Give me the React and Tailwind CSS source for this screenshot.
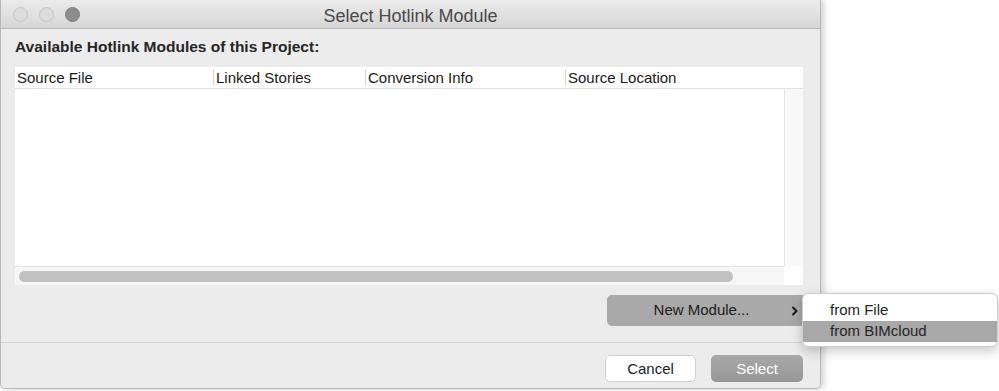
import React from "react";

const columns = [
  { title: "Source File", width: "w-[198px]" },
  { title: "Linked Stories", width: "w-[152px]" },
  { title: "Conversion Info", width: "w-[200px]" },
  { title: "Source Location", width: "flex-1" },
];

const App = () => {
  return (
    <div className="relative w-[999px] h-[391px] bg-white overflow-hidden font-['Liberation_Sans',Arial,sans-serif] text-[#1e1e1e]">
      {/* dialog window */}
      <div className="w-[821px] h-[389px] flex flex-col bg-[#ececec] border-l border-r border-b border-[#b8b8b8] rounded-b-[5px] shadow-[3px_0_6px_rgba(0,0,0,0.18)]">
        {/* title bar */}
        <div className="grid grid-cols-[1fr_auto_1fr] items-center h-[29px] bg-gradient-to-b from-[#ebebeb] to-[#d6d6d6] border-b border-[#b9b9b9]">
          <div className="flex items-center gap-[11px] pl-[12px]">
            <span className="w-[15px] h-[15px] rounded-full bg-[#dcdcdc] border border-[#c6c6c6]"></span>
            <span className="w-[15px] h-[15px] rounded-full bg-[#dcdcdc] border border-[#c6c6c6]"></span>
            <span className="w-[15px] h-[15px] rounded-full bg-[#8d8d8d] border border-[#7e7e7e]"></span>
          </div>
          <div className="text-[18px] text-[#4a4a4a] leading-none pt-[3px]">Select Hotlink Module</div>
          <div></div>
        </div>

        {/* body */}
        <div className="px-[14px] pt-[9px]">
          <div className="text-[15.5px] font-bold text-[#262626] leading-[18px] h-[29px]">
            Available Hotlink Modules of this Project:
          </div>

          {/* table */}
          <div className="w-[788px] flex flex-col">
            <div className="flex items-center h-[22px] bg-white border-b border-[#e2e2e2]">
              {columns.map((col, i) => (
                <div key={col.title} className={`${col.width} flex items-center h-full`}>
                  {i > 0 && <span className="w-px h-[16px] bg-[#d6d6d6] mr-[2px]"></span>}
                  <span className={`text-[15px] leading-none text-[#1a1a1a] ${i === 0 ? "pl-[2px]" : ""}`}>{col.title}</span>
                </div>
              ))}
            </div>
            <div className="flex h-[177px]">
              <div className="flex-1 bg-white"></div>
              <div className="w-[19px] bg-[#f8f8f8] border-l border-[#e6e6e6]"></div>
            </div>
            <div className="flex h-[19px]">
              <div className="flex-1 flex items-center bg-[#f6f6f6] border-t border-[#e4e4e4] pl-[4px]">
                <div className="w-[714px] h-[11px] rounded-full bg-[#c2c2c2]"></div>
              </div>
              <div className="w-[19px] bg-white"></div>
            </div>
          </div>

          {/* new module button */}
          <div className="flex justify-end mt-[10px]">
            <div className="relative w-[199px] h-[31px] rounded-[5px] bg-[#a9a9a9] flex items-center justify-center text-[15px] text-[#1c1c1c]">
              <span className="mr-[10px]">New Module...</span>
              <svg className="absolute right-[7px] top-[11px]" width="8" height="10" viewBox="0 0 8 10">
                <polyline points="2,1.5 5.5,5 2,8.5" fill="none" stroke="#1c1c1c" strokeWidth="2" strokeLinecap="round" strokeLinejoin="round" />
              </svg>
            </div>
          </div>
        </div>

        {/* divider */}
        <div className="mt-[16px] h-px bg-[#d2d2d2]"></div>

        {/* footer */}
        <div className="flex justify-end gap-[15px] pr-[17px] pt-[12px]">
          <button className="w-[91px] h-[27px] rounded-[5px] bg-white border border-[#cfcfcf] text-[15px] text-[#1c1c1c] leading-none">
            Cancel
          </button>
          <button className="w-[92px] h-[27px] rounded-[5px] bg-gradient-to-b from-[#a9a9a9] to-[#979797] text-[15px] text-white leading-none">
            Select
          </button>
        </div>
      </div>

      {/* submenu */}
      <div className="absolute left-[802px] top-[293px] w-[196px] h-[54px] rounded-[6px] bg-white border border-[#cdcdcd] shadow-[0_4px_12px_rgba(0,0,0,0.22)] pt-[6px] overflow-hidden">
        <div className="h-[21px] flex items-center pl-[27px] text-[15px] text-[#262626]">from File</div>
        <div className="h-[21px] flex items-center pl-[27px] text-[15px] text-[#262626] bg-[#a8a8a8]">from BIMcloud</div>
      </div>
    </div>
  );
};

export default App;
